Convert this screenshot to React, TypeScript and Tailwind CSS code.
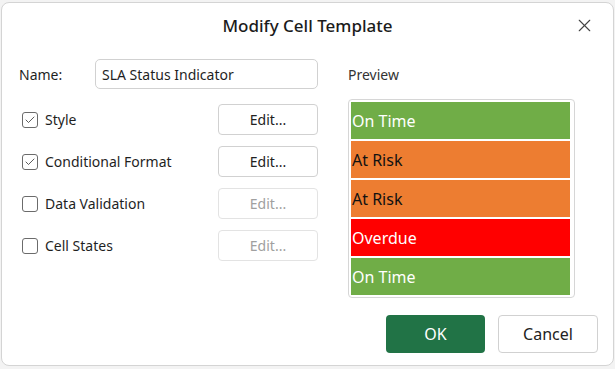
import { X, Check } from 'lucide-react'

const rows = [
  { label: 'On Time', bg: 'bg-[#70ad47]', text: 'text-white' },
  { label: 'At Risk', bg: 'bg-[#ed7d31]', text: 'text-[#111]' },
  { label: 'At Risk', bg: 'bg-[#ed7d31]', text: 'text-[#111]' },
  { label: 'Overdue', bg: 'bg-[#ff0000]', text: 'text-white' },
  { label: 'On Time', bg: 'bg-[#70ad47]', text: 'text-white' },
]

const options = [
  { label: 'Style', checked: true },
  { label: 'Conditional Format', checked: true },
  { label: 'Data Validation', checked: false },
  { label: 'Cell States', checked: false },
]

export default function App() {
  return (
    <div
      className="w-[615px] h-[369px] bg-[#f3f3f3] pt-[2px] px-[1px]"
      style={{ fontFamily: '"Segoe UI", "Noto Sans", sans-serif' }}
    >
      <div className="h-[364px] bg-white border border-[#d4d4d4] rounded-[8px] flex flex-col text-[#1f1f1f]">
        {/* header */}
        <div className="relative h-[44px] flex items-center justify-center">
          <span className="text-[17px] font-medium text-[#1b1b1b] mt-[1px]">Modify Cell Template</span>
          <X className="absolute right-[18px] top-[12px] w-[21px] h-[21px] text-[#444]" strokeWidth={1.3} />
        </div>

        <div className="flex px-[16px]">
          {/* left column */}
          <div className="w-[300px] flex flex-col">
            <div className="flex items-center h-[30px] mt-[12px]">
              <span className="w-[77px] pl-[1px] text-[14px]">Name:</span>
              <div className="flex-1 h-[30px] border border-[#d1d1d1] rounded-[5px] flex items-center px-[6px] text-[14px]">
                SLA Status Indicator
              </div>
            </div>
            <div className="flex flex-col gap-[11px] mt-[15px]">
              {options.map((o) => (
                <div key={o.label} className="flex items-center h-[31px]">
                  <div className="flex-1 flex items-center gap-[7px] pl-[4px]">
                    <span className="w-[16px] h-[16px] border border-[#6b6b6b] rounded-[3px] flex items-center justify-center">
                      {o.checked && <Check className="w-[12px] h-[12px] text-[#333]" strokeWidth={1.6} />}
                    </span>
                    <span className="text-[14px]">{o.label}</span>
                  </div>
                  <button
                    className={`w-[100px] h-[31px] rounded-[4px] border text-[14px] ${
                      o.checked ? 'border-[#d1d1d1] text-[#222]' : 'border-[#e3e3e3] text-[#a0a0a0]'
                    }`}
                  >
                    Edit...
                  </button>
                </div>
              ))}
            </div>
          </div>

          {/* preview */}
          <div className="ml-[30px] flex flex-col">
            <div className="h-[30px] mt-[12px] flex items-center text-[14px] text-[#333]">Preview</div>
            <div className="mt-[10px] w-[227px] border border-[#d6d6d6] rounded-[4px] p-[2px] flex flex-col gap-[2px]">
              {rows.map((r, i) => (
                <div
                  key={i}
                  className={`h-[37px] mr-[2px] flex items-center pl-[1px] text-[16px] ${r.bg} ${r.text}`}
                >
                  {r.label}
                </div>
              ))}
            </div>
          </div>
        </div>

        {/* footer */}
        <div className="flex justify-end gap-[13px] pr-[15px] mt-[17px]">
          <button className="w-[99px] h-[38px] rounded-[4px] bg-[#217346] text-white text-[16px]">OK</button>
          <button className="w-[100px] h-[38px] rounded-[4px] border border-[#d1d1d1] text-[16px] text-[#222]">
            Cancel
          </button>
        </div>
      </div>
    </div>
  )
}
